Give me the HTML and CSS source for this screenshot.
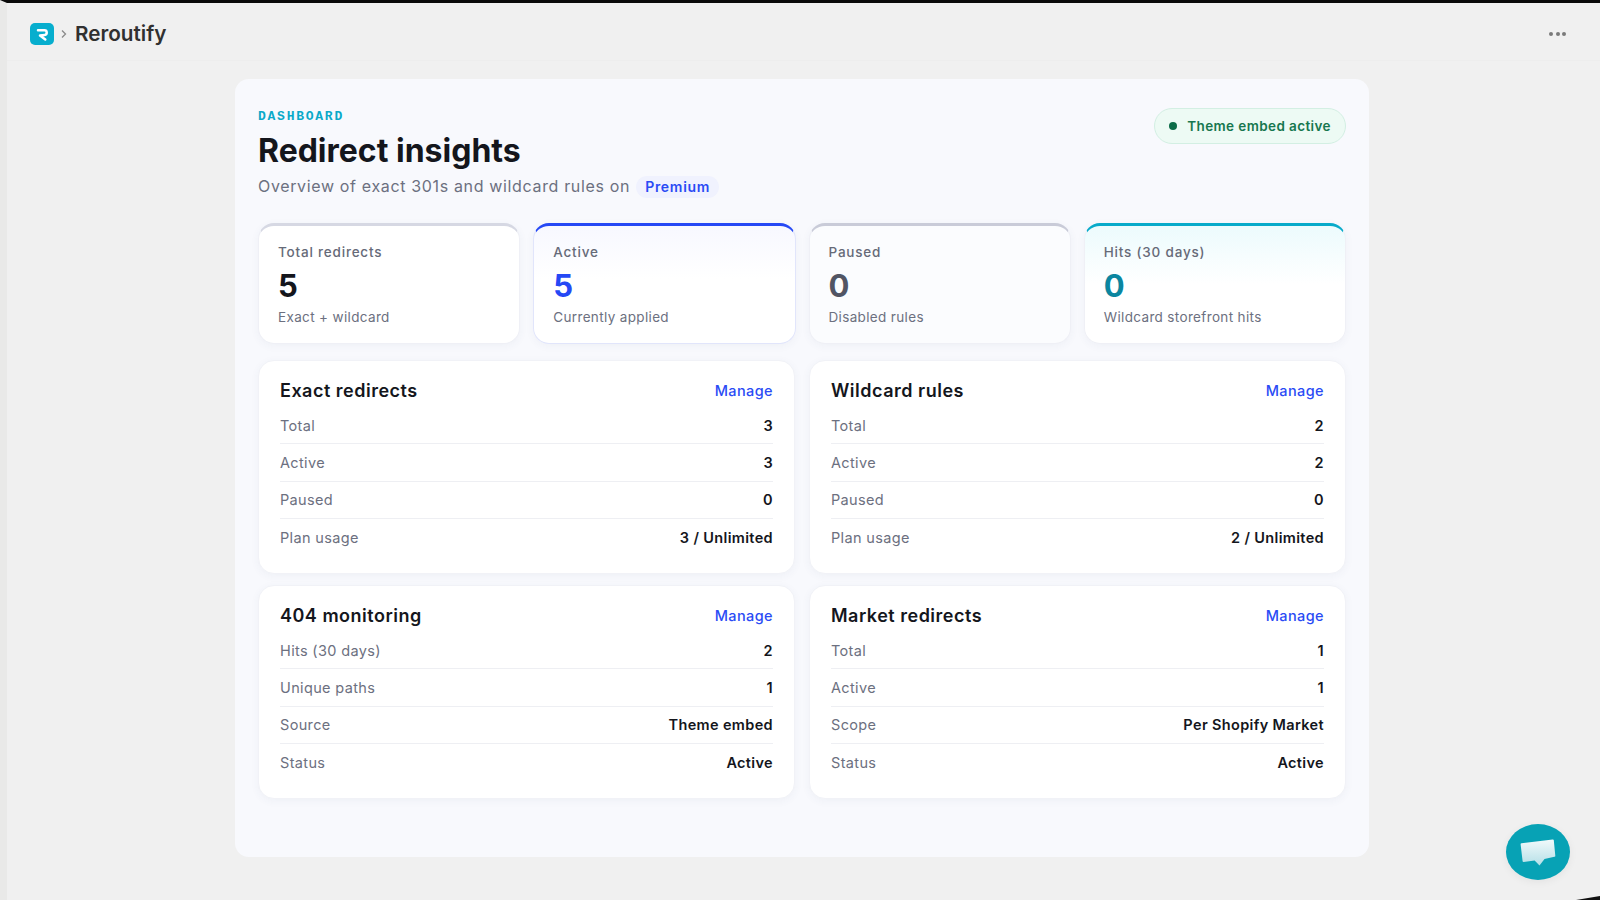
FILE: index.html
```html
<!DOCTYPE html>
<html lang="en">
<head>
<meta charset="utf-8">
<title>Reroutify</title>
<link rel="stylesheet" href="styles.css">
</head>
<body>
<div class="frame">
  <header class="topbar">
    <div class="crumbs">
      <span class="logo"><svg viewBox="0 0 24 22" width="24" height="22"><path d="M8 7.300h6.500c2.900 0 2.900 4.300 .3 4.600l-4.800 .6 5.300 3.900" fill="none" stroke="#fff" stroke-width="2.500" stroke-linecap="round" stroke-linejoin="round"/></svg></span>
      <svg class="chev" viewBox="0 0 8 10" width="8" height="10"><path d="M2 1.500 5.500 5 2 8.500" fill="none" stroke="#8a8a8a" stroke-width="1.300"/></svg>
      <span class="appname">Reroutify</span>
    </div>
    <div class="more"><i></i><i></i><i></i></div>
  </header>
  <main class="main">
    <section class="panel">
      <div class="head">
        <div>
          <div class="eyebrow">DASHBOARD</div>
          <h1>Redirect insights</h1>
          <p class="sub">Overview of exact 301s and wildcard rules on <span class="plan">Premium</span></p>
        </div>
        <div class="embed"><i></i>Theme embed active</div>
      </div>
      <div class="stats">
        <div class="stat s-total"><div class="st-label">Total redirects</div><div class="st-num">5</div><div class="st-note">Exact + wildcard</div></div>
        <div class="stat s-active"><div class="st-label">Active</div><div class="st-num">5</div><div class="st-note">Currently applied</div></div>
        <div class="stat s-paused"><div class="st-label">Paused</div><div class="st-num">0</div><div class="st-note">Disabled rules</div></div>
        <div class="stat s-hits"><div class="st-label">Hits (30 days)</div><div class="st-num">0</div><div class="st-note">Wildcard storefront hits</div></div>
      </div>
      <div class="cards">
        <div class="card">
          <div class="card-head"><h2>Exact redirects</h2><a>Manage</a></div>
          <div class="row"><span>Total</span><b>3</b></div>
          <div class="row"><span>Active</span><b>3</b></div>
          <div class="row"><span>Paused</span><b>0</b></div>
          <div class="row"><span>Plan usage</span><b>3 / Unlimited</b></div>
        </div>
        <div class="card">
          <div class="card-head"><h2>Wildcard rules</h2><a>Manage</a></div>
          <div class="row"><span>Total</span><b>2</b></div>
          <div class="row"><span>Active</span><b>2</b></div>
          <div class="row"><span>Paused</span><b>0</b></div>
          <div class="row"><span>Plan usage</span><b>2 / Unlimited</b></div>
        </div>
        <div class="card">
          <div class="card-head"><h2>404 monitoring</h2><a>Manage</a></div>
          <div class="row"><span>Hits (30 days)</span><b>2</b></div>
          <div class="row"><span>Unique paths</span><b>1</b></div>
          <div class="row"><span>Source</span><b>Theme embed</b></div>
          <div class="row"><span>Status</span><b>Active</b></div>
        </div>
        <div class="card">
          <div class="card-head"><h2>Market redirects</h2><a>Manage</a></div>
          <div class="row"><span>Total</span><b>1</b></div>
          <div class="row"><span>Active</span><b>1</b></div>
          <div class="row"><span>Scope</span><b>Per Shopify Market</b></div>
          <div class="row"><span>Status</span><b>Active</b></div>
        </div>
      </div>
    </section>
  </main>
  <div class="chat">
    <svg viewBox="0 0 36 29" width="36" height="29"><defs><linearGradient id="bub" x1="0" y1="0" x2="0" y2="1"><stop offset="0" stop-color="#f2fafb"/><stop offset="1" stop-color="#b5dfe7"/></linearGradient></defs><path d="M1.500 5.200 32.700 1.400c.7-.1 1 .2 1.100 .9l1.500 15.400c.1 .6-.3 1-.9 1.100l-9.900 2.200-5 6.500-4.900-5.100-10.900 1.700c-.6 .1-1-.2-1.100-.8L.6 6.200c0-.6.300-.9.900-1z" fill="url(#bub)"/></svg>
  </div>
  <div class="corner"></div>
</div>
</body>
</html>
```
FILE: styles.css
```css
* { box-sizing: border-box; }
html, body { margin: 0; height: 100%; }
body { background: #f0f0f0; font-family: Inter, "Liberation Sans", sans-serif; color: #14161c; overflow: hidden; }
.frame { height: 900px; border-top: 3px solid #0a0a0a; border-left: 7px solid #e9e9e8; display: flex; flex-direction: column; }
.topbar { height: 58px; flex: none; display: flex; align-items: center; justify-content: space-between; padding: 4px 34px 0 23px; border-bottom: 1px solid #ededed; }
.crumbs { display: flex; align-items: center; }
.logo { width: 24px; height: 22px; border-radius: 5px; background: #07aece; display: flex; }
.chev { margin: 0 7px 0 6px; }
.appname { font-size: 20.700px; font-weight: 600; color: #303030; letter-spacing: 0; }
.more { display: flex; gap: 2.500px; }
.more i { width: 4px; height: 4px; border-radius: 50%; background: #7a7a7a; }
.main { flex: 1; padding: 18px 0 0 228px; }
.panel { width: 1134px; height: 778px; background: #f8f9fd; border-radius: 14px; padding: 24px 23px 0; }
.head { display: flex; justify-content: space-between; align-items: flex-start; height: 120px; }
.eyebrow { font-family: "Liberation Mono", monospace; font-weight: 700; font-size: 13px; letter-spacing: 1.750px; color: #0aa9c9; line-height: 15px; margin-top: 6px; }
h1 { margin: 7px 0 0; font-size: 32px; line-height: 40px; font-weight: 700; letter-spacing: 0; color: #14161c; }
.sub { margin: 2px 0 0; font-size: 16px; line-height: 26px; color: #6c7080; display: flex; align-items: center; gap: 1px; white-space: pre-wrap; letter-spacing: .65px; }
.plan { background: #f0f2fe; color: #2a4bf5; font-size: 14px; font-weight: 600; border-radius: 11px; padding: 0 9px; line-height: 22px; letter-spacing: .7px; margin-top: 2px; }
.embed { margin-top: 5px; height: 36px; border-radius: 18px; background: #edfaf4; border: 1px solid #d3efe3; color: #17774f; font-size: 13.500px; font-weight: 600; display: flex; align-items: center; padding: 0 14px; gap: 10px; letter-spacing: .4px; }
.embed i { width: 8px; height: 8px; border-radius: 50%; background: #0b6b47; }
.stats { display: grid; grid-template-columns: repeat(4, 1fr); gap: 13px; }
.stat { height: 121px; border-radius: 16px; border: 1px solid #eff0f6; border-top: 3px solid #d6d8e3; background: #fff; padding: 18px 19px 0; box-shadow: 0 2px 8px rgba(60,70,120,.05); }
.st-label { font-size: 13.500px; font-weight: 500; color: #666a78; line-height: 17px; letter-spacing: .8px; }
.st-num { font-size: 31px; font-weight: 700; line-height: 36px; margin-top: 7px; color: #14161c; }
.st-note { font-size: 13.500px; color: #6c7080; line-height: 17px; margin-top: 5px; letter-spacing: .35px; }
.s-active { border-color: #e1e5fb; border-top-color: #2548f5; background: linear-gradient(#f7f8ff, #fff 45%); }
.s-active .st-num { color: #2548f5; }
.s-paused { border-top-color: #c9cbd8; background: #fbfcfe; }
.s-paused .st-num { color: #515564; }
.s-hits { border-top-color: #07aaca; background: linear-gradient(#ecfbfd, #fff 50%); }
.s-hits .st-num { color: #0b86a0; }
.cards { margin-top: 16px; display: grid; grid-template-columns: 1fr 1fr; gap: 11px 14px; }
.card { height: 214px; background: #fff; border-radius: 16px; border: 1px solid #f1f2f7; padding: 17px 21px 0; box-shadow: 0 2px 8px rgba(60,70,120,.05); }
.card-head { display: flex; justify-content: space-between; align-items: center; height: 24px; margin-bottom: 5px; }
h2 { margin: 0; font-size: 18px; font-weight: 600; color: #14161c; letter-spacing: .5px; }
.card-head a { color: #2a4bf5; font-size: 14.500px; font-weight: 500; letter-spacing: .4px; }
.row { display: flex; justify-content: space-between; align-items: center; height: 37.300px; font-size: 14.500px; border-bottom: 1px solid #eeeff3; letter-spacing: .35px; }
.row:last-child { border-bottom: 0; }
.row span { color: #6c7080; }
.row b { font-weight: 600; color: #14161c; }
.chat { position: fixed; left: 1506px; top: 824px; width: 64px; height: 56px; border-radius: 50%; background: #07a2b5; display: flex; align-items: center; justify-content: center; box-shadow: 0 2px 8px rgba(0,0,0,.06); }
.corner { position: fixed; right: 0; bottom: 0; width: 24px; height: 4px; background: #111; clip-path: polygon(100% 0, 100% 100%, 0 100%); }
```
